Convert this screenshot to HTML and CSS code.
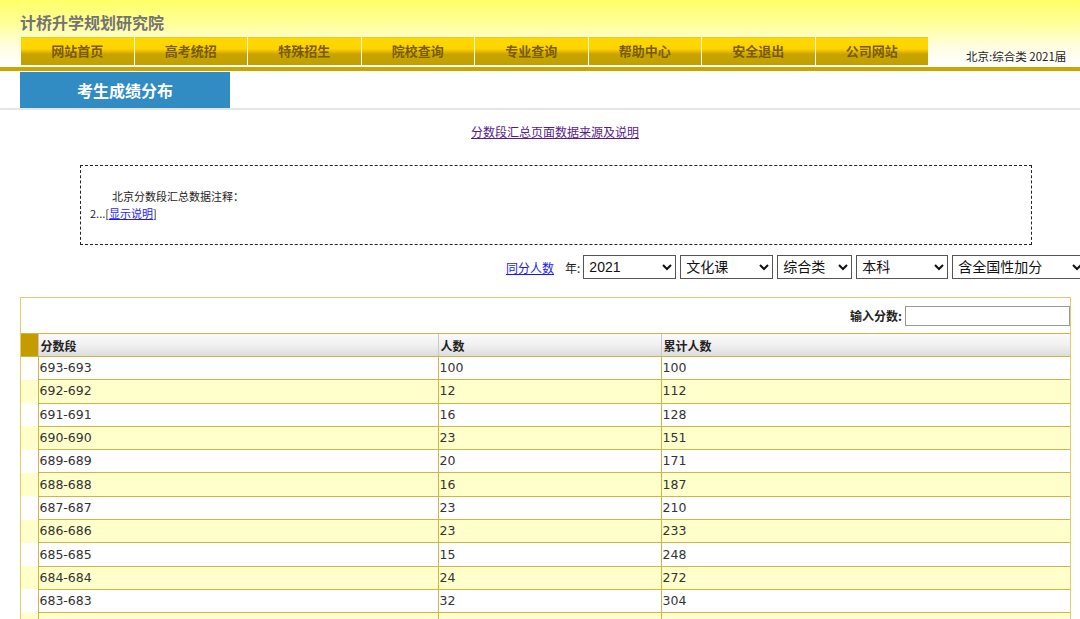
FILE: index.html
```html
<!DOCTYPE html>
<html lang="zh">
<head>
<meta charset="utf-8">
<title>考生成绩分布</title>
<link rel="stylesheet" href="styles.css">
</head>
<body>
<div class="header">
  <div class="site-title">计桥升学规划研究院</div>
  <div class="nav-row">
    <ul class="nav">
      <li>网站首页</li>
      <li>高考统招</li>
      <li>特殊招生</li>
      <li>院校查询</li>
      <li>专业查询</li>
      <li>帮助中心</li>
      <li>安全退出</li>
      <li>公司网站</li>
    </ul>
    <div class="user-info">北京:综合类 2021届</div>
  </div>
</div>
<div class="gold-bar"></div>
<div class="tab-row">
  <div class="tab">考生成绩分布</div>
</div>

<div class="source-link"><a href="#">分数段汇总页面数据来源及说明</a></div>

<div class="note-box">
  <p class="note-title">北京分数段汇总数据注释：</p>
  <p class="note-line">2...[<a href="#" class="show-link">显示说明</a>]</p>
</div>

<div class="filters">
  <a href="#" class="same-link">同分人数</a>
  <span class="year-label">年:</span>
  <select class="sel sel-year"><option>2021</option></select>
  <select class="sel sel-subject"><option>文化课</option></select>
  <select class="sel sel-type"><option>综合类</option></select>
  <select class="sel sel-level"><option>本科</option></select>
  <select class="sel sel-bonus"><option>含全国性加分</option></select>
</div>

<div class="panel">
  <div class="search-row">
    <label class="search-label">输入分数:</label>
    <input type="text" class="search-input">
  </div>
  <table class="score-table">
    <colgroup>
      <col class="c-gutter"><col class="c-range"><col class="c-count"><col class="c-total">
    </colgroup>
    <thead>
      <tr><th class="gutter"></th><th>分数段</th><th>人数</th><th>累计人数</th></tr>
    </thead>
    <tbody>
      <tr><td class="gutter"></td><td>693-693</td><td>100</td><td>100</td></tr>
      <tr class="alt"><td class="gutter"></td><td>692-692</td><td>12</td><td>112</td></tr>
      <tr><td class="gutter"></td><td>691-691</td><td>16</td><td>128</td></tr>
      <tr class="alt"><td class="gutter"></td><td>690-690</td><td>23</td><td>151</td></tr>
      <tr><td class="gutter"></td><td>689-689</td><td>20</td><td>171</td></tr>
      <tr class="alt"><td class="gutter"></td><td>688-688</td><td>16</td><td>187</td></tr>
      <tr><td class="gutter"></td><td>687-687</td><td>23</td><td>210</td></tr>
      <tr class="alt"><td class="gutter"></td><td>686-686</td><td>23</td><td>233</td></tr>
      <tr><td class="gutter"></td><td>685-685</td><td>15</td><td>248</td></tr>
      <tr class="alt"><td class="gutter"></td><td>684-684</td><td>24</td><td>272</td></tr>
      <tr><td class="gutter"></td><td>683-683</td><td>32</td><td>304</td></tr>
      <tr class="alt"><td class="gutter"></td><td>682-682</td><td>31</td><td>335</td></tr>
    </tbody>
  </table>
</div>
</body>
</html>
```
FILE: styles.css
```css
html, body {
  margin: 0;
  padding: 0;
  overflow: hidden;
  background: #fff;
}
body {
  width: 1080px;
  height: 619px;
  font-family: "Noto Sans CJK SC", "Liberation Sans", sans-serif;
  font-size: 12px;
  color: #222;
}

.header {
  height: 66px;
  background: linear-gradient(to bottom, #ffff66 0%, #ffff99 35%, #fffde0 70%, #ffffff 100%);
  box-sizing: border-box;
  padding-top: 11px;
}
.site-title {
  margin-left: 20px;
  font-size: 16px;
  line-height: 22px;
  font-weight: bold;
  color: #737373;
  height: 26px;
}
.nav-row {
  display: flex;
  align-items: flex-end;
  height: 29px;
}
.nav {
  list-style: none;
  margin: 0 0 1px 21px;
  padding: 0;
  display: flex;
  gap: 1px;
  height: 28px;
}
.nav li {
  width: 112.5px;
  height: 28px;
  box-sizing: border-box;
  border-top: 1px solid #e8c830;
  background: linear-gradient(to bottom, #ffd800 0%, #ffd400 40%, #c9a400 60%, #bfa000 100%);
  color: #7b5a00;
  font-size: 13px;
  font-weight: bold;
  text-align: center;
  line-height: 26px;
}
.user-info {
  margin-left: 38px;
  font-size: 11.5px;
  color: #222;
  line-height: 16px;
  padding-bottom: 2px;
}

.gold-bar {
  height: 4px;
  margin-top: 1px;
  background: #c8a800;
}
.tab-row {
  height: 36px;
  margin-top: 1px;
  border-bottom: 2px solid #e6e6e6;
  padding-left: 20px;
}
.tab {
  width: 210px;
  height: 36px;
  background: #318cc4;
  color: #fff;
  font-size: 16px;
  font-weight: bold;
  text-align: center;
  line-height: 36px;
}

.source-link {
  text-align: center;
  margin-top: 13px;
  line-height: 18px;
  padding-left: 30px;
}
.source-link a {
  color: #551a8b;
  font-size: 12px;
}

.note-box {
  margin: 24px 0 0 80px;
  width: 952px;
  height: 80px;
  box-sizing: border-box;
  border: 1px dashed #222;
  padding-top: 22px;
  font-size: 11px;
  color: #222;
}
.note-box p {
  margin: 0;
  line-height: 17px;
}
.note-title {
  padding-left: 31px;
}
.note-line {
  padding-left: 9px;
}
.show-link {
  color: #1a1aff;
}

.filters {
  display: flex;
  align-items: center;
  margin-top: 10px;
  padding-left: 506px;
  height: 24px;
  white-space: nowrap;
}
.same-link {
  color: #1a1aee;
  font-size: 12px;
}
.year-label {
  margin-left: 11px;
  margin-right: 3px;
  font-size: 12px;
  color: #222;
}
.sel {
  height: 24px;
  margin: 0 4px 0 0;
  font-family: "Liberation Sans", "Noto Sans CJK SC", sans-serif;
  font-size: 14px;
  color: #111;
  border: 1px solid #555;
  border-radius: 0;
  background: #fff;
  padding: 0 1px;
  flex-shrink: 0;
}
.sel-year { width: 93px; }
.sel-subject { width: 93px; }
.sel-type { width: 75px; }
.sel-level { width: 92px; }
.sel-bonus { width: 134px; }

.panel {
  margin: 18px 0 0 20px;
  width: 1051px;
  border: 1px solid #e2cc68;
  height: 340px;
  box-sizing: border-box;
}
.search-row {
  display: flex;
  justify-content: flex-end;
  align-items: center;
  height: 35px;
  border-bottom: 1px solid #d4b440;
}
.search-label {
  font-size: 12px;
  font-weight: bold;
  color: #222;
  margin-right: 3px;
}
.search-input {
  width: 165px;
  height: 20px;
  box-sizing: border-box;
  border: 1px solid #999;
  margin: 0;
  padding: 0;
}

.score-table {
  border-collapse: collapse;
  width: 1049px;
  table-layout: fixed;
  font-family: "DejaVu Sans", Verdana, sans-serif;
  font-size: 12.5px;
  color: #333;
}
.c-gutter { width: 17px; }
.c-range { width: 400px; }
.c-count { width: 223px; }
.c-total { width: auto; }

.score-table th {
  height: 22px;
  padding: 0 2px;
  text-align: left;
  font-family: "Noto Sans CJK SC", sans-serif;
  font-size: 12px;
  font-weight: bold;
  color: #222;
  background: linear-gradient(to bottom, #fafafa 0%, #f0f0f0 50%, #dcdcdc 100%);
  border-left: 1px solid #c8c8c8;
  border-bottom: 1px solid #d4b440;
}
.score-table th.gutter {
  background: #c49c00;
  border-left: none;
}
.score-table td {
  height: 22.3px;
  padding: 0 1px;
  border: 1px solid #d4b440;
  border-right: none;
  line-height: 18px;
}
.score-table td.gutter {
  border-left: none;
  border-top: none;
  border-bottom: none;
}
.score-table tr.alt td {
  background: #ffffcc;
}
```
